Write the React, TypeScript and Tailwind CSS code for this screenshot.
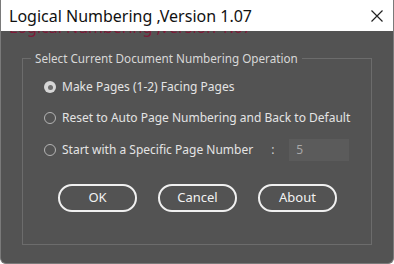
import React from "react";

function Radio({ checked }: { checked?: boolean }) {
  return checked ? (
    <span className="w-[12px] h-[12px] rounded-full bg-[#d6d6d6] flex items-center justify-center shrink-0">
      <span className="w-[5px] h-[5px] rounded-full bg-[#6e6e6e]" />
    </span>
  ) : (
    <span className="w-[12px] h-[12px] rounded-full border border-[#b4b4b4] shrink-0" />
  );
}

function Row({ checked, label, children }: { checked?: boolean; label: string; children?: React.ReactNode }) {
  return (
    <div className="flex items-center h-[22px]">
      <Radio checked={checked} />
      <span className="ml-[6px] text-[12px] text-[#e4e4e4] whitespace-nowrap">{label}</span>
      {children}
    </div>
  );
}

function Btn({ label }: { label: string }) {
  return (
    <button className="w-[79px] h-[28px] rounded-full border-2 border-[#f0f0f0] text-[#f2f2f2] text-[13px] flex items-center justify-center">
      {label}
    </button>
  );
}

export default function App() {
  return (
    <div
      className="w-[394px] h-[264px] bg-[#535353] flex flex-col overflow-hidden rounded-b-[6px] border-x border-b border-[#7a7a7a]"
      style={{ fontFamily: '"Noto Sans", "Open Sans", sans-serif' }}
    >
      <div className="h-[31px] bg-white flex items-center justify-between pl-[8px] pr-[10px] shrink-0">
        <span className="text-[16px] text-[#111] whitespace-nowrap">Logical Numbering ,Version 1.07</span>
        <svg width="12" height="12" viewBox="0 0 12 12">
          <path d="M0.5 0.5 L11.5 11.5 M11.5 0.5 L0.5 11.5" stroke="#222" strokeWidth="1.2" />
        </svg>
      </div>
      <div className="h-[6px] overflow-hidden pl-[8px] shrink-0">
        <div className="text-[16px] text-[#7e1a38] whitespace-nowrap leading-[20px] -mt-[14px]">
          Logical Numbering ,Version 1.07
        </div>
      </div>
      <div className="flex-1 px-[21px] pb-[18px] pt-[13px]">
        <fieldset className="h-full border border-[#6c6c6c] pl-[21px] pr-[8px] pt-[10px]">
          <legend className="-ml-[13px] px-[4px] text-[11.7px] text-[#d8d8d8] leading-[16px]">
            Select Current Document Numbering Operation
          </legend>
          <div className="flex flex-col gap-[9px]">
            <Row checked label="Make Pages (1-2) Facing Pages" />
            <Row label="Reset to Auto Page Numbering and Back to Default" />
            <div className="mt-[1px]">
              <Row label="Start with a Specific Page Number">
                <span className="ml-[18px] text-[12px] text-[#d0d0d0]">:</span>
                <div className="ml-[15px] w-[60px] h-[22px] bg-[#5b5b5b] flex items-center pl-[7px] text-[12px] text-[#a8a8a8]">
                  5
                </div>
              </Row>
            </div>
          </div>
          <div className="flex gap-[21px] mt-[23px] ml-[14px]">
            <Btn label="OK" />
            <Btn label="Cancel" />
            <Btn label="About" />
          </div>
        </fieldset>
      </div>
    </div>
  );
}
